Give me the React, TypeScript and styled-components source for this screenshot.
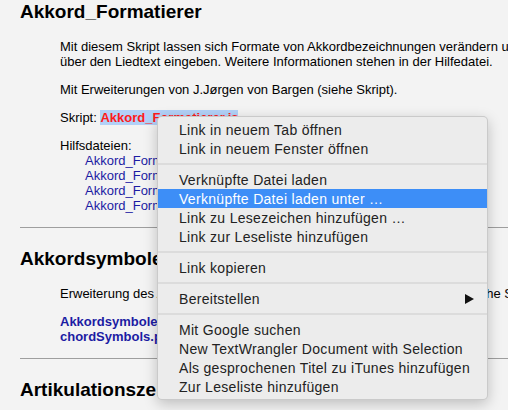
import React from 'react'
import styled, { createGlobalStyle } from 'styled-components'

const Global = createGlobalStyle`
html, body {
  margin: 0;
  padding: 0;
  background: #f3f3f3;
  overflow: hidden;
}
body {
  font-family: "Liberation Sans", Arial, sans-serif;
  color: #000;
}
`

const Page = styled.div`
position: relative;
width: 508px;
height: 410px;
overflow: hidden;
`

const Title = styled.h2`
margin: 0;
padding: 1px 0 0 20px;
font-size: 19px;
line-height: 22px;
font-weight: bold;
white-space: nowrap;
`

const Body = styled.div`
padding: 16px 0 0 60px;
font-size: 13px;
line-height: 15px;
white-space: nowrap;
`

const Para = styled.p`
margin: 0 0 13px 0;
`

const Selected = styled.span`
background: #b2d1f7;
`

const RedLink = styled.a`
color: #ff1a1a;
font-weight: bold;
text-decoration: none;
`

const FileList = styled.div`
padding-left: 25px;
`

const FileLink = styled.a<{ $bold?: boolean }>`
display: block;
color: #1c1ca3;
text-decoration: none;
font-weight: ${(p) => (p.$bold ? 'bold' : 'normal')};
`

const Rule = styled.hr`
margin: 14px 0 19px 20px;
border: none;
border-top: 1px solid #9e9e9e;
`

const Menu = styled.div`
position: absolute;
left: 157px;
top: 116px;
width: 331px;
padding: 3px 0 3px 0;
box-sizing: border-box;
background: #ececec;
border: 1px solid rgba(0, 0, 0, 0.14);
border-radius: 5px;
box-shadow: 0 4px 14px rgba(0, 0, 0, 0.22);
font-family: "Liberation Sans", Arial, sans-serif;
font-size: 14px;
letter-spacing: 0.3px;
color: #222;
`

const Item = styled.div<{ $active?: boolean }>`
display: flex;
align-items: center;
justify-content: space-between;
height: 19px;
padding: 0 13px 0 21px;
white-space: nowrap;
background: ${(p) => (p.$active ? '#3d8ef7' : 'transparent')};
color: ${(p) => (p.$active ? '#fff' : 'inherit')};
`

const Separator = styled.div`
height: 2px;
margin: 5px 0;
background: #dcdcdc;
`

const Arrow = styled.span`
width: 0;
height: 0;
border-top: 5px solid transparent;
border-bottom: 5px solid transparent;
border-left: 9px solid #111;
`

function App() {
  return (
    <Page>
      <Global />
      <Title>Akkord_Formatierer</Title>
      <Body>
        <Para>
          Mit diesem Skript lassen sich Formate von Akkordbezeichnungen verändern und Akkorde
          <br />
          über den Liedtext eingeben. Weitere Informationen stehen in der Hilfedatei.
        </Para>
        <Para>Mit Erweiterungen von J.Jørgen von Bargen (siehe Skript).</Para>
        <Para>
          Skript: <Selected><RedLink href="#">Akkord_Formatierer.js</RedLink> </Selected>
        </Para>
        <Para>
          Hilfsdateien:
          <FileList>
            <FileLink href="#">Akkord_Formatierer_Hilfe.pdf</FileLink>
            <FileLink href="#">Akkord_Formatierer_Beispiel.pdf</FileLink>
            <FileLink href="#">Akkord_Formatierer_Help.pdf</FileLink>
            <FileLink href="#">Akkord_Formatierer_Example.pdf</FileLink>
          </FileList>
        </Para>
      </Body>
      <Rule />
      <Title>Akkordsymbole</Title>
      <Body>
        <Para>Erweiterung des Akkord_Formatierer für die englische Akkordsymbole (siehe Skript).</Para>
        <Para>
          <FileLink $bold href="#">Akkordsymbole.pdf</FileLink>
          <FileLink $bold href="#">chordSymbols.pdf</FileLink>
        </Para>
      </Body>
      <Rule />
      <Title>Artikulationszeichen</Title>

      <Menu>
        <Item>Link in neuem Tab öffnen</Item>
        <Item>Link in neuem Fenster öffnen</Item>
        <Separator />
        <Item>Verknüpfte Datei laden</Item>
        <Item $active>Verknüpfte Datei laden unter …</Item>
        <Item>Link zu Lesezeichen hinzufügen …</Item>
        <Item>Link zur Leseliste hinzufügen</Item>
        <Separator />
        <Item>Link kopieren</Item>
        <Separator />
        <Item>
          Bereitstellen
          <Arrow />
        </Item>
        <Separator />
        <Item>Mit Google suchen</Item>
        <Item>New TextWrangler Document with Selection</Item>
        <Item>Als gesprochenen Titel zu iTunes hinzufügen</Item>
        <Item>Zur Leseliste hinzufügen</Item>
      </Menu>
    </Page>
  )
}

export default App
